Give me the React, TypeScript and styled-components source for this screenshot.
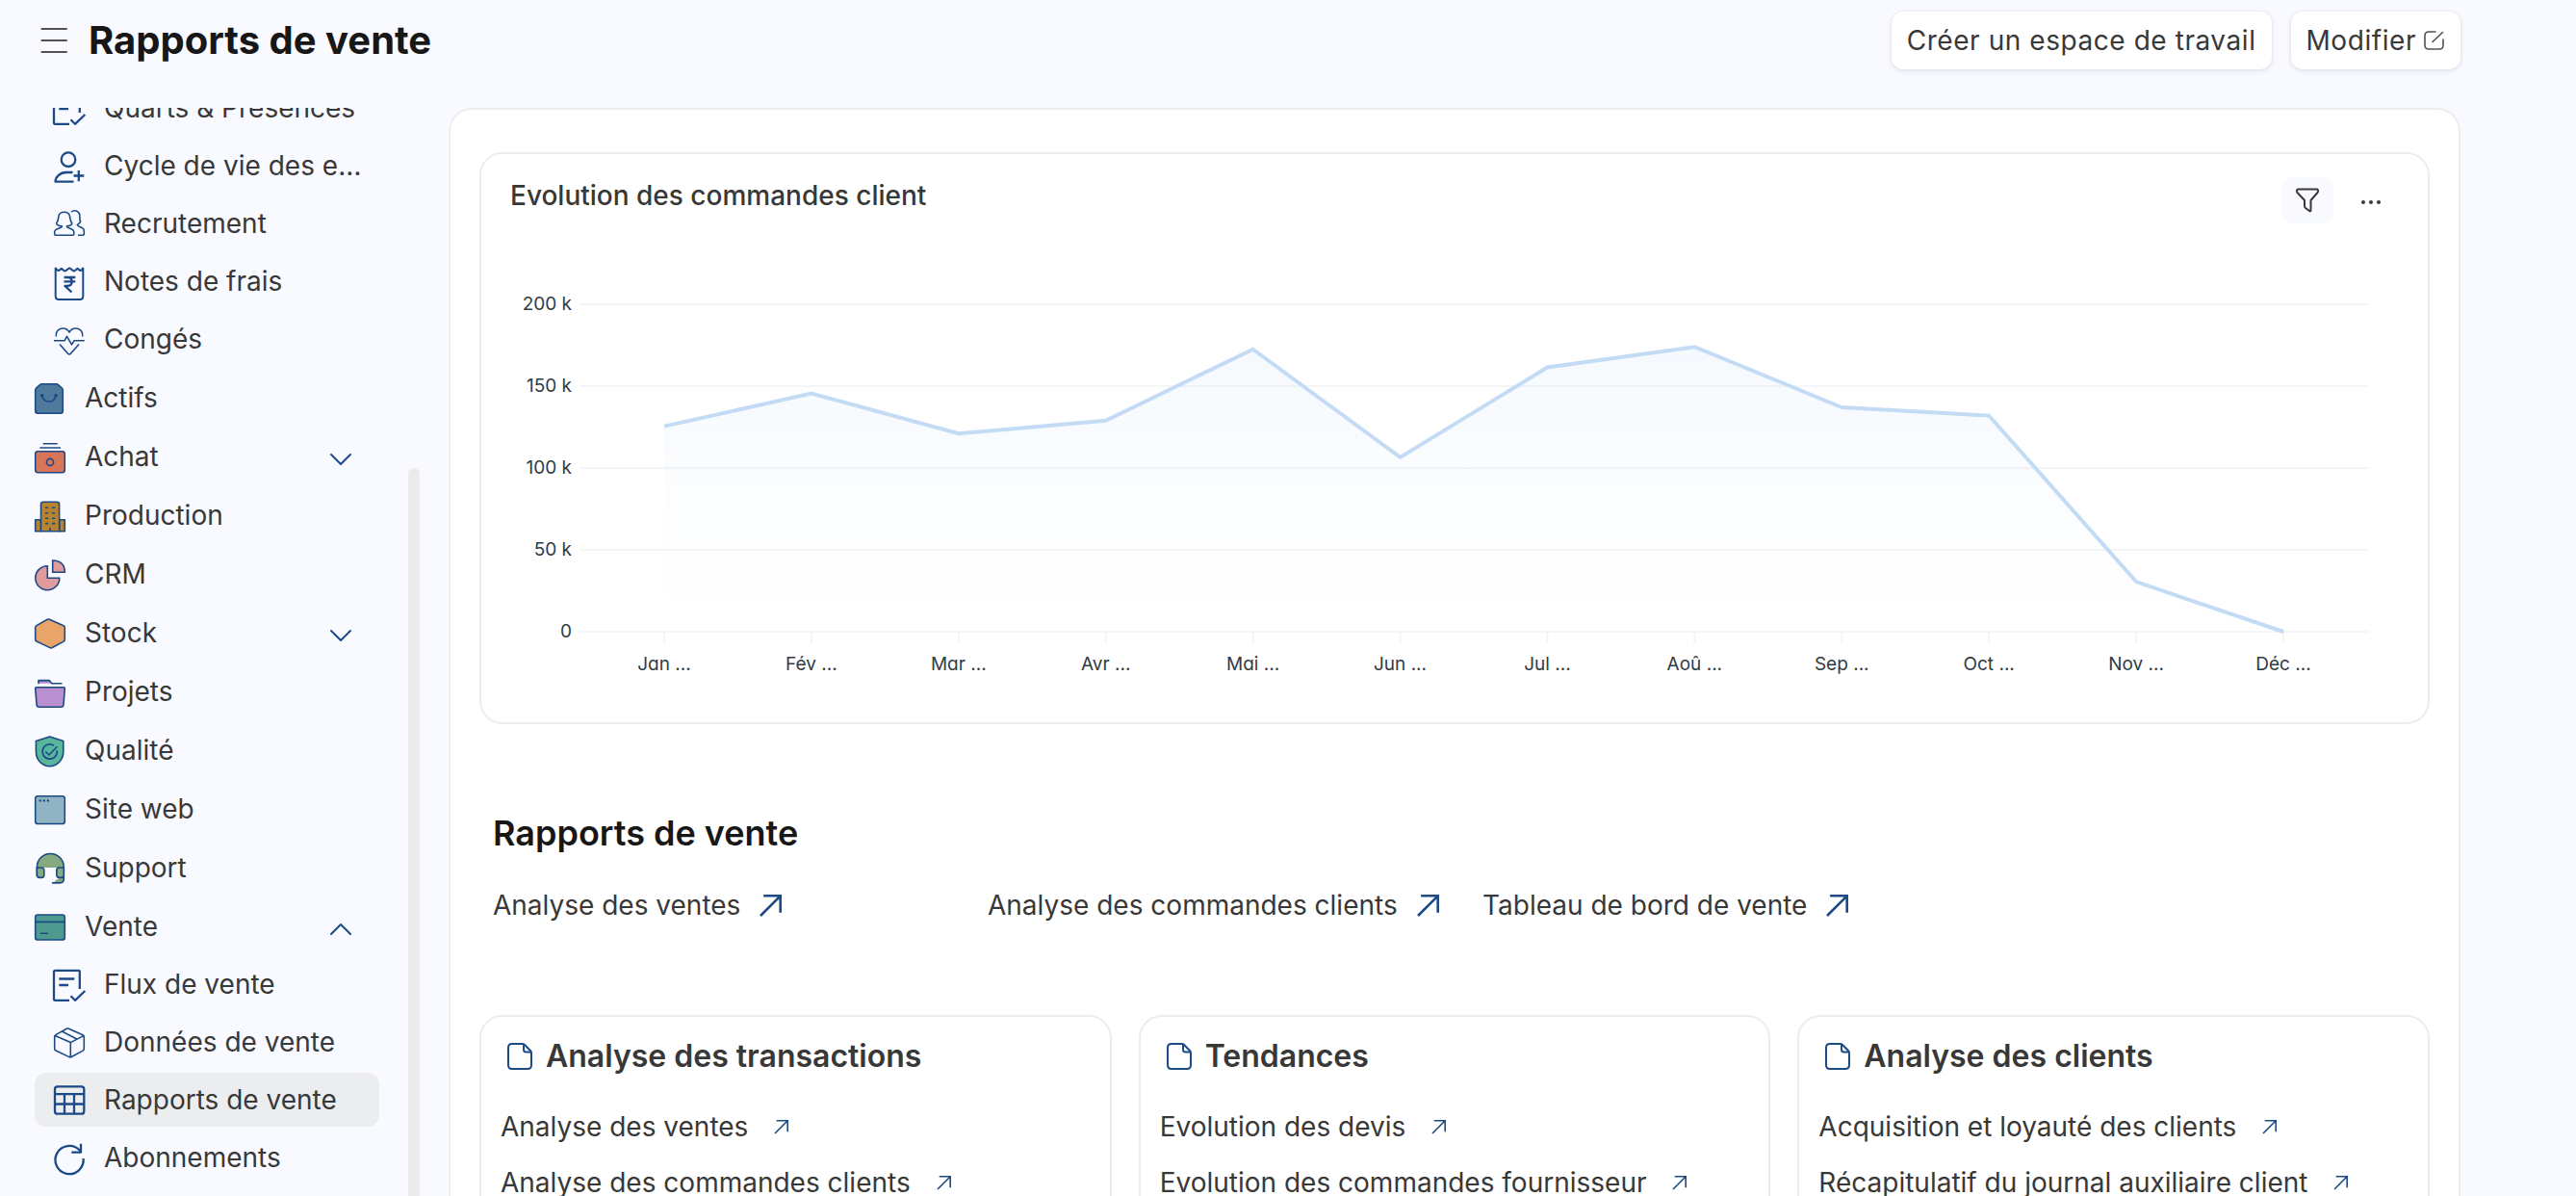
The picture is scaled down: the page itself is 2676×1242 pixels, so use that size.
import React from "react";
import styled, { createGlobalStyle, css } from "styled-components";

const ink = "#383838";
const navy = "#1b4a86";
const line = "#ededed";

const GlobalStyle = createGlobalStyle`
  *, *::before, *::after { box-sizing: border-box; }
  body {
    margin: 0;
    background: #f9faff;
    color: ${ink};
    font-family: Inter, "Noto Sans", sans-serif;
    font-size: 28px;
    font-weight: 420;
    line-height: 32px;
    font-optical-sizing: none;
  }
  h1, h2, h3, p, ul { margin: 0; padding: 0; }
  ul { list-style: none; }
  a { color: inherit; text-decoration: none; }
  button {
    font: inherit;
    color: inherit;
    border: 0;
    padding: 0;
    background: none;
    cursor: pointer;
  }
  svg { display: block; flex: none; overflow: visible; }
`;

const Page = styled.div`
  display: flex;
  flex-direction: column;
  height: 100vh;
  overflow: hidden;
  padding-right: 120px;
`;

const Header = styled.header`
  display: flex;
  align-items: flex-start;
  justify-content: space-between;
  flex: none;
  height: 112px;
  padding: 12px 0 0 40px;
`;

const TitleGroup = styled.div`
  display: flex;
  align-items: center;
  gap: 20px;
  height: 60px;
`;

const PageTitle = styled.h1`
  font-size: 40px;
  line-height: 48px;
  font-weight: 700;
  color: #171717;
`;

const Actions = styled.div`
  display: flex;
  gap: 20px;
`;

const ActionButton = styled.button`
  display: flex;
  align-items: center;
  gap: 8px;
  height: 60px;
  padding: 0 16px;
  border-radius: 12px;
  background: #fff;
  font-weight: 440;
  letter-spacing: 0.02em;
  box-shadow: 0 0 2px rgba(0, 0, 0, 0.12), 0 2px 6px rgba(0, 0, 0, 0.08);
`;

const Body = styled.div`
  display: flex;
  flex: 1;
  min-height: 0;
`;

const Sidebar = styled.nav`
  display: flex;
  flex: none;
  width: 466px;
  padding-left: 36px;
  overflow: hidden;
`;

const Menu = styled.ul`
  display: flex;
  flex-direction: column;
  gap: 4px;
  width: 358px;
  margin-top: -28px;
`;

const Row = styled.a<{ $child?: boolean; $active?: boolean }>`
  display: flex;
  align-items: center;
  gap: 20px;
  height: ${(p) => (p.$child ? 56 : 57)}px;
  padding-right: 18px;
  padding-left: ${(p) => (p.$child ? 20 : 0)}px;
  border-radius: 12px;
  ${(p) => p.$active && css`background: #ecedef;`}
`;

const RowLabel = styled.span`
  flex: 1;
  overflow: hidden;
  text-overflow: ellipsis;
  white-space: nowrap;
`;

const ScrollTrack = styled.div`
  width: 12px;
  margin-left: 30px;
  padding-top: 374px;
`;

const ScrollThumb = styled.div`
  height: 100%;
  border-radius: 6px 6px 0 0;
  background: #ebebeb;
`;

const Panel = styled.main`
  flex: 1;
  min-width: 0;
  padding: 44px 30px 0;
  border: 2px solid ${line};
  border-bottom: 0;
  border-radius: 24px 24px 0 0;
  background: #fff;
  overflow: hidden;
`;

const Box = styled.section`
  border: 2px solid ${line};
  border-radius: 24px;
`;

const ChartBox = styled(Box)`
  padding: 24px 30px 48px;
`;

const ChartHead = styled.div`
  display: flex;
  align-items: flex-start;
  justify-content: space-between;
  height: 86px;
`;

const ChartTitle = styled.h2`
  padding-top: 3px;
  font-size: 28px;
  line-height: 32px;
  font-weight: 460;
`;

const ChartTools = styled.div`
  display: flex;
  gap: 12px;
  padding-right: 2px;
`;

const ToolButton = styled.button<{ $tinted?: boolean }>`
  display: flex;
  align-items: center;
  justify-content: center;
  width: 54px;
  height: 48px;
  border-radius: 12px;
  background: ${(p) => (p.$tinted ? "#f9faff" : "transparent")};
`;

const ChartSvg = styled.svg`
  width: 100%;
  height: auto;
`;

const AxisText = styled.text`
  font-size: 19px;
  font-weight: 400;
  font-feature-settings: "cv11";
  fill: #313b44;
`;

const SectionTitle = styled.h2`
  margin-top: 91px;
  padding-left: 14px;
  font-size: 36px;
  line-height: 44px;
  font-weight: 600;
  color: #171717;
`;

const Shortcuts = styled.div`
  display: grid;
  grid-template-columns: repeat(4, minmax(0, 1fr));
  gap: 30px;
  margin-top: 37px;
`;

const Shortcut = styled.a`
  display: flex;
  align-items: center;
  gap: 20px;
  padding-left: 14px;
  font-weight: 440;
  white-space: nowrap;
`;

const Cards = styled.div`
  display: grid;
  grid-template-columns: repeat(3, minmax(0, 1fr));
  gap: 28px;
  margin-top: 98px;
`;

const Card = styled(Box)`
  padding: 21px 20px 40px;
`;

const CardTitle = styled.h3`
  display: flex;
  align-items: center;
  gap: 14px;
  padding-left: 7px;
  margin-bottom: 24px;
  font-size: 32px;
  line-height: 40px;
  font-weight: 600;
`;

const CardLink = styled.a`
  display: flex;
  align-items: center;
  gap: 27px;
  height: 58px;
  white-space: nowrap;
`;

const IconSvg = styled.svg`
  width: 32px;
  height: 32px;
  margin-top: 2px;
  fill: none;
  stroke: ${navy};
  stroke-width: 1.6;
  stroke-linejoin: round;
`;

const icons: Record<string, React.ReactNode> = {
  shift: (
    <g strokeWidth="2.3">
      <path d="M26.8 20V2.2Q26.8.8 25.4.8H1.4Q0 .8 0 2.2V30.3Q0 31.8 1.4 31.8H16" />
      <path d="M5.3 9.5H21.3M5.3 16H15M17.5 27.3 22 31.8 32.3 22" />
    </g>
  ),
  person: (
    <g strokeWidth="2.3">
      <circle cx="15" cy="8.7" r="7.3" />
      <path d="M19.5 22H13C6 22 1.5 27 1.5 31.7H20.5M20.5 25.5H31.3M25.8 20V31.2" />
    </g>
  ),
  people: (
    <>
      <path d="M8.3 17.8C5.3 17.6 3 16.4 2.7 14.8 4.8 12.7 4.5 9 5 7.2 6.2 2 15.2 2 16.4 7.2 17 9 16.7 12.7 18.8 14.8 18.5 16.4 16.3 17.6 13.4 17.8 13.2 18.6 13.6 19 14.4 19.3L19 21.2Q20.8 22 20.8 24V26Q20.8 27.2 19.6 27.2H1.9Q.7 27.2.7 26V24Q.7 22 2.5 21.2L7.1 19.3C8 19 8.4 18.6 8.3 17.8Z" />
      <path d="M18 3.2C20.5.6 26 1.6 26.8 6 27.2 9 26.2 11 27.6 13 27.2 15.2 24.4 15.4 24.3 16.8 25.5 18.4 28 18.6 29.5 19.7Q31.3 20.6 31.3 22.6V26Q31.3 27.2 30 27.2H25" />
    </>
  ),
  receipt: (
    <g strokeWidth="2">
      <path d="M1.7 1.5V30.5Q1.7 34 5.2 34H26.8Q30.3 34 30.3 30.5V1.5L28.5 3.6Q27.8 4.4 26.8 3.6L24.5 1.9 21.8 4Q20.8 4.8 19.8 4L17.2 1.9Q16.2 1.2 15.2 1.9L12.5 4Q11.5 4.8 10.5 4L7.8 1.9 5.5 3.6Q4.5 4.4 3.7 3.6Z" />
      <path strokeWidth="2.3" d="M10.5 11H22.3M10.5 15.4H22.3M11 11H14Q18.6 11 18.6 15.4T14 19.9H11.5L18.4 26.5" />
    </g>
  ),
  heart: (
    <path d="M2.3 12.5C1.5 3.5 12 1.2 16 8 20 1.2 30.5 3.5 29.7 12.5M0 16.8H11L13.5 12.3 18.5 20.8 21 16.8H31.8M6 20.5 14.6 30.2Q16 31.6 17.4 30.2L26 20.5" />
  ),
  asset: (
    <>
      <path fill="#4f7a9b" d="M.7 7Q.7 5.8 1.6 5L5.8 1.4Q6.6.7 7.6.7H22.4Q23.4.7 24.2 1.4L28.4 5Q29.3 5.8 29.3 7V28.8Q29.3 31.3 26.8 31.3H3.2Q.7 31.3.7 28.8Z" />
      <path d="M7.7 13A7.2 6.8 0 0 0 22 13" />
      <circle cx="7.7" cy="12.8" r="1.1" fill={navy} />
      <circle cx="22" cy="12.8" r="1.1" fill={navy} />
    </>
  ),
  buying: (
    <>
      <path d="M8.7 1.7H23.7M5.3 6H27" />
      <rect x=".7" y="9.7" width="30.6" height="22" rx="2.6" fill="#d87559" />
      <circle cx="16" cy="21" r="3.6" />
    </>
  ),
  factory: (
    <>
      <path fill="#b88430" d="M.7 19.7H6.5V31.8H.7ZM25.6 19.7H31.3V31.8H25.6Z" />
      <path fill="#b88430" d="M6.5 31.8V3.7Q6.5 1.2 9 1.2H23.1Q25.6 1.2 25.6 3.7V31.8ZM16 31.5V28" />
      <path d="M11 7.3H14.3M18 7.3H21.3M11 12.8H14.3M18 12.8H21.3M11 18.2H14.3M18 18.2H21.3M11 23.6H14.3M18 23.6H21.3" />
    </>
  ),
  crm: (
    <>
      <path fill="#e09c9c" strokeLinejoin="miter" d="M13.3 6.7A12.5 12.5 0 1 0 25.8 19.2H13.3Z" />
      <path fill="#e09c9c" strokeLinejoin="miter" d="M18.7 1V13.3H31.3Q31.3 1.2 18.7 1Z" />
    </>
  ),
  stock: (
    <path fill="#e8a469" d="M13.2 1.3Q14.3.7 15.4 1.2L30 7.8Q31.3 8.4 31.3 9.8V22Q31.3 23.4 30.1 24.1L18.3 30.5Q17.1 31.1 15.9 30.6L2 24Q.7 23.4.7 22V9.6Q.7 8.2 1.9 7.6Z" />
  ),
  projects: (
    <>
      <path fill="#b98fd0" stroke="none" d="M4 6.8V3.6H15.2L18.4 6.8Z" />
      <path d="M4 7.2V3.6H15.2L17.2 6.2Q17.6 6.8 18.4 6.8H28.5" />
      <path fill="#b98fd0" d="M1.9 10.8H30.1Q31.4 10.8 31.3 12.1L30 28.8Q29.8 31.3 27.3 31.3H4.8Q2.3 31.3 2.1 28.8L.7 12.1Q.6 10.8 1.9 10.8Z" />
    </>
  ),
  quality: (
    <>
      <path fill="#57b69c" d="M15.6.9 29.8 5.6V16.5C29.8 25 23.5 31.7 15.6 31.7S1.4 25 1.4 16.5V5.6Z" />
      <path d="M20 10.3A7.6 7.6 0 1 0 23.2 15.5M11.3 16.5 15 20 23.4 11.3" />
    </>
  ),
  website: (
    <>
      <rect x=".7" y="1.7" width="30.6" height="28.8" rx="2.6" fill="#90b4c3" />
      <path strokeWidth="2.4" strokeLinecap="round" d="M5.7 6.4h.01M9.7 6.4h.01M13.9 6.4h.01" />
    </>
  ),
  support: (
    <>
      <path fill="#85aa82" stroke="none" d="M2.4 15C2 6 8 .5 16.3.5S30.5 6 30.3 15Z" />
      <path fill="#85aa82" stroke="none" d="M20 30.5Q22.5 26.3 30.3 25V28Q30.3 30.5 27 30.5Z" />
      <path d="M2.4 24V14.4A13.9 13.9 0 0 1 30.3 14.4V26.5Q30.3 30.9 26 30.9H18" />
      <path fill="#85aa82" d="M2.4 15H7Q9.8 15 9.8 17.8V22.6Q9.8 25.4 7 25.4H5.2Q2.4 25.4 2.4 22.6ZM30.3 15H25.6Q22.8 15 22.8 17.8V22.6Q22.8 25.4 25.6 25.4H27.5Q30.3 25.4 30.3 22.6Z" />
    </>
  ),
  selling: (
    <>
      <rect x=".7" y="3" width="30.6" height="26" rx="2.6" fill="#4f9a8f" />
      <path d="M.7 10.4H31.3M5.7 22.2H14" />
    </>
  ),
  package: (
    <path d="M13.2 1.3Q14.3.7 15.4 1.2L30 7.8Q31.3 8.4 31.3 9.8V22Q31.3 23.4 30.1 24.1L18.3 30.5Q17.1 31.1 15.9 30.6L2 24Q.7 23.4.7 22V9.6Q.7 8.2 1.9 7.6ZM1.2 8.4 17.3 15.6 30.8 8.6M17.3 15.6V30.8M8.3 4 23.8 12" />
  ),
  table: (
    <g strokeWidth="2.3">
      <rect x="1" y="1.3" width="30.3" height="28.4" rx="2.8" />
      <path d="M1 9.2H31.3M1 19.5H31.3M11 9.2V29.7M21 9.2V29.7" />
    </g>
  ),
  refresh: (
    <g strokeWidth="2.3">
      <path d="M30.6 16A14.6 14.6 0 1 1 26.5 7.3L28 9.6" />
      <path d="M28 .7V9.7H18.3" />
    </g>
  ),
};

type Item = { label: string; icon: string; child?: boolean; active?: boolean; chevron?: "up" | "down" };

const items: Item[] = [
  { label: "Quarts & Présences", icon: "shift", child: true },
  { label: "Cycle de vie des employés", icon: "person", child: true },
  { label: "Recrutement", icon: "people", child: true },
  { label: "Notes de frais", icon: "receipt", child: true },
  { label: "Congés", icon: "heart", child: true },
  { label: "Actifs", icon: "asset" },
  { label: "Achat", icon: "buying", chevron: "down" },
  { label: "Production", icon: "factory" },
  { label: "CRM", icon: "crm" },
  { label: "Stock", icon: "stock", chevron: "down" },
  { label: "Projets", icon: "projects" },
  { label: "Qualité", icon: "quality" },
  { label: "Site web", icon: "website" },
  { label: "Support", icon: "support" },
  { label: "Vente", icon: "selling", chevron: "up" },
  { label: "Flux de vente", icon: "shift", child: true },
  { label: "Données de vente", icon: "package", child: true },
  { label: "Rapports de vente", icon: "table", child: true, active: true },
  { label: "Abonnements", icon: "refresh", child: true },
];

const ChevronSvg = styled.svg`
  width: 22px;
  height: 12px;
  margin: 6px 11px 0 0;
  fill: none;
  stroke: ${navy};
  stroke-width: 2;
  stroke-linecap: round;
  stroke-linejoin: round;
`;

const Chevron = ({ dir }: { dir: "up" | "down" }) => (
  <ChevronSvg viewBox="0 0 22 12" aria-hidden="true">
    <path d={dir === "down" ? "M1 1 11 11 21 1" : "M1 11 11 1 21 11"} />
  </ChevronSvg>
);

const Arrow = ({ size, weight }: { size: number; weight: number }) => (
  <svg width={size} height={size} viewBox={`0 0 ${size} ${size}`} fill="none" stroke={navy} strokeWidth={weight} aria-hidden="true">
    <path d={`M1 ${size - 1} ${size - weight / 2} ${weight / 2}M${size * 0.18} ${weight / 2}H${size - weight / 2}V${size * 0.82}`} />
  </svg>
);

const FileIcon = () => (
  <svg width="26" height="28" viewBox="0 0 26 28" fill="none" stroke={navy} strokeWidth="2" strokeLinejoin="round" aria-hidden="true">
    <path d="M5 1H15.5Q17 1 18 2L24 8Q25 9 25 10.5V23Q25 27 21 27H5Q1 27 1 23V5Q1 1 5 1Z" />
    <path d="M17 1.5V7Q17 9.5 19.5 9.5H24.8" />
  </svg>
);

const plot = { left: 72, right: 1930, top: 46, bottom: 386, first: 160, last: 1842 };
const ticks = [200, 150, 100, 50, 0];
const series: [string, number][] = [
  ["Jan", 125.5],
  ["Fév", 145.5],
  ["Mar", 121],
  ["Avr", 129],
  ["Mai", 172.5],
  ["Jun", 106.5],
  ["Jul", 161.5],
  ["Aoû", 174],
  ["Sep", 137],
  ["Oct", 132],
  ["Nov", 30.5],
  ["Déc", 0],
];

const xAt = (i: number) => plot.first + (i * (plot.last - plot.first)) / (series.length - 1);
const yAt = (v: number) => plot.bottom - (v * (plot.bottom - plot.top)) / 200;

const SalesChart = () => {
  const points = series.map(([, v], i) => `${xAt(i)},${yAt(v)}`).join(" ");
  return (
    <ChartSvg viewBox="0 0 1962 432" role="img" aria-label="Evolution des commandes client">
      <defs>
        <linearGradient id="fade" x1="0" y1="0" x2="0" y2="1">
          <stop offset="0" stopColor="#c3dbf6" stopOpacity="0.16" />
          <stop offset="0.5" stopColor="#c3dbf6" stopOpacity="0.06" />
          <stop offset="1" stopColor="#c3dbf6" stopOpacity="0" />
        </linearGradient>
      </defs>
      {ticks.map((t) => (
        <g key={t}>
          <line x1={plot.left} x2={plot.right} y1={yAt(t)} y2={yAt(t)} stroke="#f4f5f6" strokeWidth="2" />
          <AxisText x="64" y={yAt(t) + 6} textAnchor="end">{t === 0 ? "0" : `${t} k`}</AxisText>
        </g>
      ))}
      {series.map(([m], i) => (
        <g key={m}>
          <line x1={xAt(i)} x2={xAt(i)} y1={plot.bottom} y2={plot.bottom + 12} stroke="#f4f5f6" strokeWidth="2" />
          <AxisText x={xAt(i)} y={plot.bottom + 40} textAnchor="middle">{`${m} ...`}</AxisText>
        </g>
      ))}
      <polygon points={`${xAt(0)},${plot.bottom} ${points} ${xAt(11)},${plot.bottom}`} fill="url(#fade)" />
      <polyline points={points} fill="none" stroke="#c3dbf5" strokeWidth="4" />
    </ChartSvg>
  );
};

const cards = [
  { title: "Analyse des transactions", links: ["Analyse des ventes", "Analyse des commandes clients"] },
  { title: "Tendances", links: ["Evolution des devis", "Evolution des commandes fournisseur"] },
  { title: "Analyse des clients", links: ["Acquisition et loyauté des clients", "Récapitulatif du journal auxiliaire client"] },
];

export default function App() {
  return (
    <>
      <GlobalStyle />
      <Page>
        <Header>
          <TitleGroup>
            <button type="button" aria-label="Menu">
              <svg width="32" height="32" viewBox="0 0 32 32" fill="none" stroke="#525252" strokeWidth="2" strokeLinecap="round">
                <path d="M3.5 4H29M3.5 16H29M3.5 28H29" />
              </svg>
            </button>
            <PageTitle>Rapports de vente</PageTitle>
          </TitleGroup>
          <Actions>
            <ActionButton type="button">Créer un espace de travail</ActionButton>
            <ActionButton type="button">
              Modifier
              <svg width="22" height="20" viewBox="0 0 22 20" fill="none" stroke="#525252" strokeWidth="1.6" strokeLinecap="round" strokeLinejoin="round" aria-hidden="true">
                <path d="M12 1H5Q1 1 1 5V15Q1 19 5 19H16Q20 19 20 15V9M9 11.5 19.5 1.5" />
              </svg>
            </ActionButton>
          </Actions>
        </Header>
        <Body>
          <Sidebar aria-label="Modules">
            <Menu>
              {items.map((it) => (
                <li key={it.label}>
                  <Row href="#" $child={it.child} $active={it.active}>
                    <IconSvg viewBox="0 0 32 32" aria-hidden="true">{icons[it.icon]}</IconSvg>
                    <RowLabel>{it.label}</RowLabel>
                    {it.chevron && <Chevron dir={it.chevron} />}
                  </Row>
                </li>
              ))}
            </Menu>
            <ScrollTrack>
              <ScrollThumb />
            </ScrollTrack>
          </Sidebar>
          <Panel>
            <ChartBox>
              <ChartHead>
                <ChartTitle>Evolution des commandes client</ChartTitle>
                <ChartTools>
                  <ToolButton type="button" $tinted aria-label="Filtrer">
                    <svg width="24" height="24" viewBox="0 0 24 24" fill="none" stroke={ink} strokeWidth="2" strokeLinejoin="round">
                      <path d="M2 .5H22Q24 1.5 22.5 4L15.5 12V22Q15.5 23.8 14 23L10 20Q9 19.3 9 18V12L1.5 4Q0 1.5 2 .5Z" />
                    </svg>
                  </ToolButton>
                  <ToolButton type="button" aria-label="Plus">
                    <svg width="22" height="4" viewBox="0 0 22 4" fill={ink}>
                      <circle cx="3" cy="4" r="2" />
                      <circle cx="11" cy="4" r="2" />
                      <circle cx="19" cy="4" r="2" />
                    </svg>
                  </ToolButton>
                </ChartTools>
              </ChartHead>
              <SalesChart />
            </ChartBox>
            <SectionTitle>Rapports de vente</SectionTitle>
            <Shortcuts>
              {["Analyse des ventes", "Analyse des commandes clients", "Tableau de bord de vente"].map((s) => (
                <Shortcut href="#" key={s}>
                  {s}
                  <Arrow size={23} weight={2.6} />
                </Shortcut>
              ))}
            </Shortcuts>
            <Cards>
              {cards.map((c) => (
                <Card key={c.title}>
                  <CardTitle>
                    <FileIcon />
                    {c.title}
                  </CardTitle>
                  {c.links.map((l) => (
                    <CardLink href="#" key={l}>
                      {l}
                      <Arrow size={15} weight={1.6} />
                    </CardLink>
                  ))}
                </Card>
              ))}
            </Cards>
          </Panel>
        </Body>
      </Page>
    </>
  );
}
